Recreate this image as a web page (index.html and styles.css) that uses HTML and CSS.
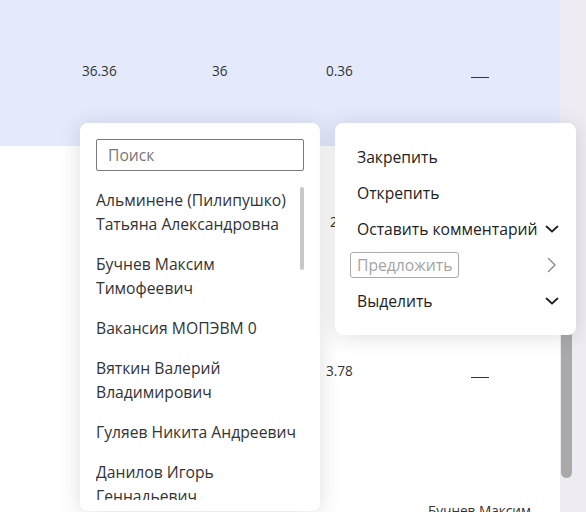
FILE: index.html
```html
<!DOCTYPE html>
<html lang="ru">
<head>
<meta charset="utf-8">
<link rel="stylesheet" href="styles.css">
</head>
<body>
<div class="page">
  <div class="table">
    <div class="row row-head">
      <span class="cell">36.36</span>
      <span class="cell">36</span>
      <span class="cell">0.36</span>
      <span class="cell"><span class="dash"></span></span>
    </div>
    <div class="row row-2">
      <span class="cell"></span>
      <span class="cell"></span>
      <span class="cell cell-shift">2</span>
      <span class="cell"></span>
    </div>
    <div class="row row-3">
      <span class="cell"></span>
      <span class="cell"></span>
      <span class="cell">3.78</span>
      <span class="cell"><span class="dash"></span></span>
    </div>
    <div class="row row-4">
      <span class="cell"></span>
      <span class="cell"></span>
      <span class="cell"></span>
      <span class="cell cell-name">Бучнев Максим</span>
    </div>
  </div>
  <div class="track"><div class="thumb"></div></div>

  <div class="popup popup-list">
    <div class="search">Поиск</div>
    <div class="list-wrap">
      <ul class="list">
        <li>Альминене (Пилипушко) Татьяна Александровна</li>
        <li>Бучнев Максим Тимофеевич</li>
        <li>Вакансия МОПЭВМ 0</li>
        <li>Вяткин Валерий Владимирович</li>
        <li>Гуляев Никита Андреевич</li>
        <li>Данилов Игорь Геннадьевич</li>
        <li>Егоров Павел Сергеевич</li>
      </ul>
      <div class="list-track"><div class="list-thumb"></div></div>
    </div>
  </div>

  <div class="popup popup-menu">
    <div class="mi"><span>Закрепить</span></div>
    <div class="mi"><span>Открепить</span></div>
    <div class="mi"><span>Оставить комментарий</span>
      <span class="ic"><svg width="14" height="14" viewBox="0 0 14 14"><path d="M1.5 4.5 L7 9.5 L12.5 4.5" fill="none" stroke="#222" stroke-width="1.8" stroke-linecap="round" stroke-linejoin="round"/></svg></span>
    </div>
    <div class="mi"><span class="disabled">Предложить</span>
      <span class="ic"><svg width="14" height="16" viewBox="0 0 14 16"><path d="M3.5 1.5 L10 8 L3.5 14.5" fill="none" stroke="#888" stroke-width="1.4" stroke-linecap="round" stroke-linejoin="round"/></svg></span>
    </div>
    <div class="mi"><span>Выделить</span>
      <span class="ic"><svg width="14" height="14" viewBox="0 0 14 14"><path d="M1.5 4.5 L7 9.5 L12.5 4.5" fill="none" stroke="#222" stroke-width="1.8" stroke-linecap="round" stroke-linejoin="round"/></svg></span>
    </div>
  </div>
</div>
</body>
</html>
```
FILE: styles.css
```css
html, body {
  margin: 0;
  padding: 0;
}
body {
  width: 586px;
  height: 512px;
  overflow: hidden;
  font-family: "Open Sans", "Noto Sans", sans-serif;
  color: #333;
  background: #fff;
}
.page {
  position: relative;
  display: flex;
  width: 586px;
  height: 512px;
  overflow: hidden;
}
.table {
  width: 560px;
  flex: none;
  background: #fff;
}
.row {
  display: grid;
  grid-template-columns: 130px 114px 145px 1fr;
  padding-left: 82px;
  align-items: center;
  font-size: 13.6px;
  line-height: 18px;
  color: #333;
}
.row-head {
  height: 146px;
  background: #e4e9fc;
  padding-bottom: 4px;
  box-sizing: border-box;
}
.row-2 {
  height: 152px;
}
.row-3 {
  height: 146px;
}
.row-4 {
  align-items: start;
  padding-top: 58px;
}
.cell-shift {
  padding-left: 4px;
}
.cell-name {
  margin-left: -43px;
}
.dash {
  display: block;
  width: 18px;
  height: 1px;
  background: #333;
  margin-top: 12px;
}
.track {
  flex: 1;
  background: #eeebf3;
  padding-left: 1px;
}
.thumb {
  margin-top: 150px;
  width: 11px;
  height: 328px;
  border-radius: 6px;
  background: #a9a9a9;
}

.popup {
  position: absolute;
  background: #fff;
  border-radius: 8px;
  box-shadow: 0 2px 22px rgba(0, 0, 0, 0.13);
  box-sizing: border-box;
}
.popup-list {
  left: 80px;
  top: 123px;
  width: 240px;
  height: 388px;
  padding: 16px 16px 0 16px;
}
.search {
  box-sizing: border-box;
  height: 32px;
  border: 1px solid #7a7a7a;
  border-radius: 2px;
  padding-left: 11px;
  font-size: 15.7px;
  line-height: 30px;
  color: #777;
}
.list-wrap {
  margin-top: 9px;
  height: 320px;
  overflow: hidden;
  display: flex;
}
.list {
  list-style: none;
  margin: 0;
  padding: 0;
  width: 204px;
  flex: none;
}
.list li {
  padding: 8px 0;
  font-size: 15.7px;
  line-height: 24px;
  color: #333;
}
.list-track {
  width: 4px;
  flex: none;
}
.list-thumb {
  margin-top: 7px;
  height: 83px;
  border-radius: 2px;
  background: #c8c8c8;
}

.popup-menu {
  left: 335px;
  top: 123px;
  width: 241px;
  height: 212px;
  padding: 16px 17px 16px 22px;
}
.mi {
  height: 36px;
  display: flex;
  align-items: center;
  justify-content: space-between;
  font-size: 15.7px;
  line-height: 24px;
  color: #222;
}
.ic {
  display: flex;
  width: 14px;
  justify-content: center;
}
.disabled {
  margin-left: -7px;
  padding: 0 6px;
  height: 24px;
  border: 1px solid #aaa;
  border-radius: 3px;
  color: #a4a4a4;
}
```
